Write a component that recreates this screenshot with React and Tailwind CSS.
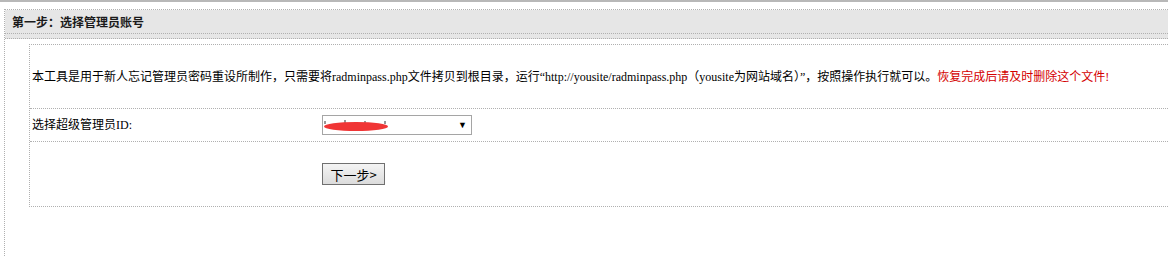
import React from 'react';

const dotted = 'border-dotted border-[#b0b0b0]';

const App = () => {
  return (
    <div
      className="min-h-[256px] bg-white text-[12px] text-black overflow-hidden"
      style={{ fontFamily: '"Liberation Serif", "Noto Sans CJK SC", serif' }}
    >
      <div className="h-[2px] bg-[#b8b8b8]" />
      <div className={`ml-[4px] mt-[7px] min-h-[247px] border-l border-t ${dotted}`}>
        {/* header */}
        <div className="bg-[#e6e6e6]">
          <div className={`h-[24px] flex items-center pl-[7px] border-b ${dotted}`}>
            <span
              className="font-bold text-[12px] text-[#1a1a1a]"
              style={{ fontFamily: '"Noto Sans CJK SC", sans-serif' }}
            >
              第一步：选择管理员账号
            </span>
          </div>
          <div className={`h-[5px] border-b ${dotted}`} />
        </div>

        {/* form table */}
        <div className={`ml-[24px] mt-[5px] border-l border-t border-b ${dotted}`}>
          <div className={`h-[64px] flex items-center pl-[2px] border-b ${dotted} whitespace-nowrap`}>
            <span>
              本工具是用于新人忘记管理员密码重设所制作，只需要将radminpass.php文件拷贝到根目录，运行“http://yousite/radminpass.php（yousite为网站域名）”，按照操作执行就可以。
            </span>
            <span className="text-[#d40000]">恢复完成后请及时删除这个文件!</span>
          </div>

          <div className={`h-[33px] grid grid-cols-[292px_1fr] items-center border-b ${dotted}`}>
            <div className="pl-[2px]">选择超级管理员ID:</div>
            <div>
              <div className="relative w-[150px] h-[20px] border border-[#a5a5a5] bg-white flex items-center justify-end pr-[4px]">
                <span className="text-[9px] leading-none">▼</span>
                <svg className="absolute left-0 top-[4px]" width="68" height="12" viewBox="0 0 68 12">
                  <path d="M2 1 L2 4 M22 0 L22 4 M42 1 L42 4 M62 1 L62 4" stroke="#333" strokeWidth="1" />
                  <ellipse cx="33" cy="6.5" rx="32" ry="4.5" fill="#f03535" />
                </svg>
              </div>
            </div>
          </div>

          <div className="h-[64px] grid grid-cols-[292px_1fr] items-center">
            <div />
            <div>
              <button
                type="button"
                className="w-[63px] h-[22px] border border-[#707070] bg-gradient-to-b from-[#f4f4f4] to-[#dcdcdc] text-[13px] leading-none"
                style={{ fontFamily: '"Noto Sans CJK SC", sans-serif' }}
              >
                下一步&gt;
              </button>
            </div>
          </div>
        </div>
      </div>
    </div>
  );
};

export default App;
